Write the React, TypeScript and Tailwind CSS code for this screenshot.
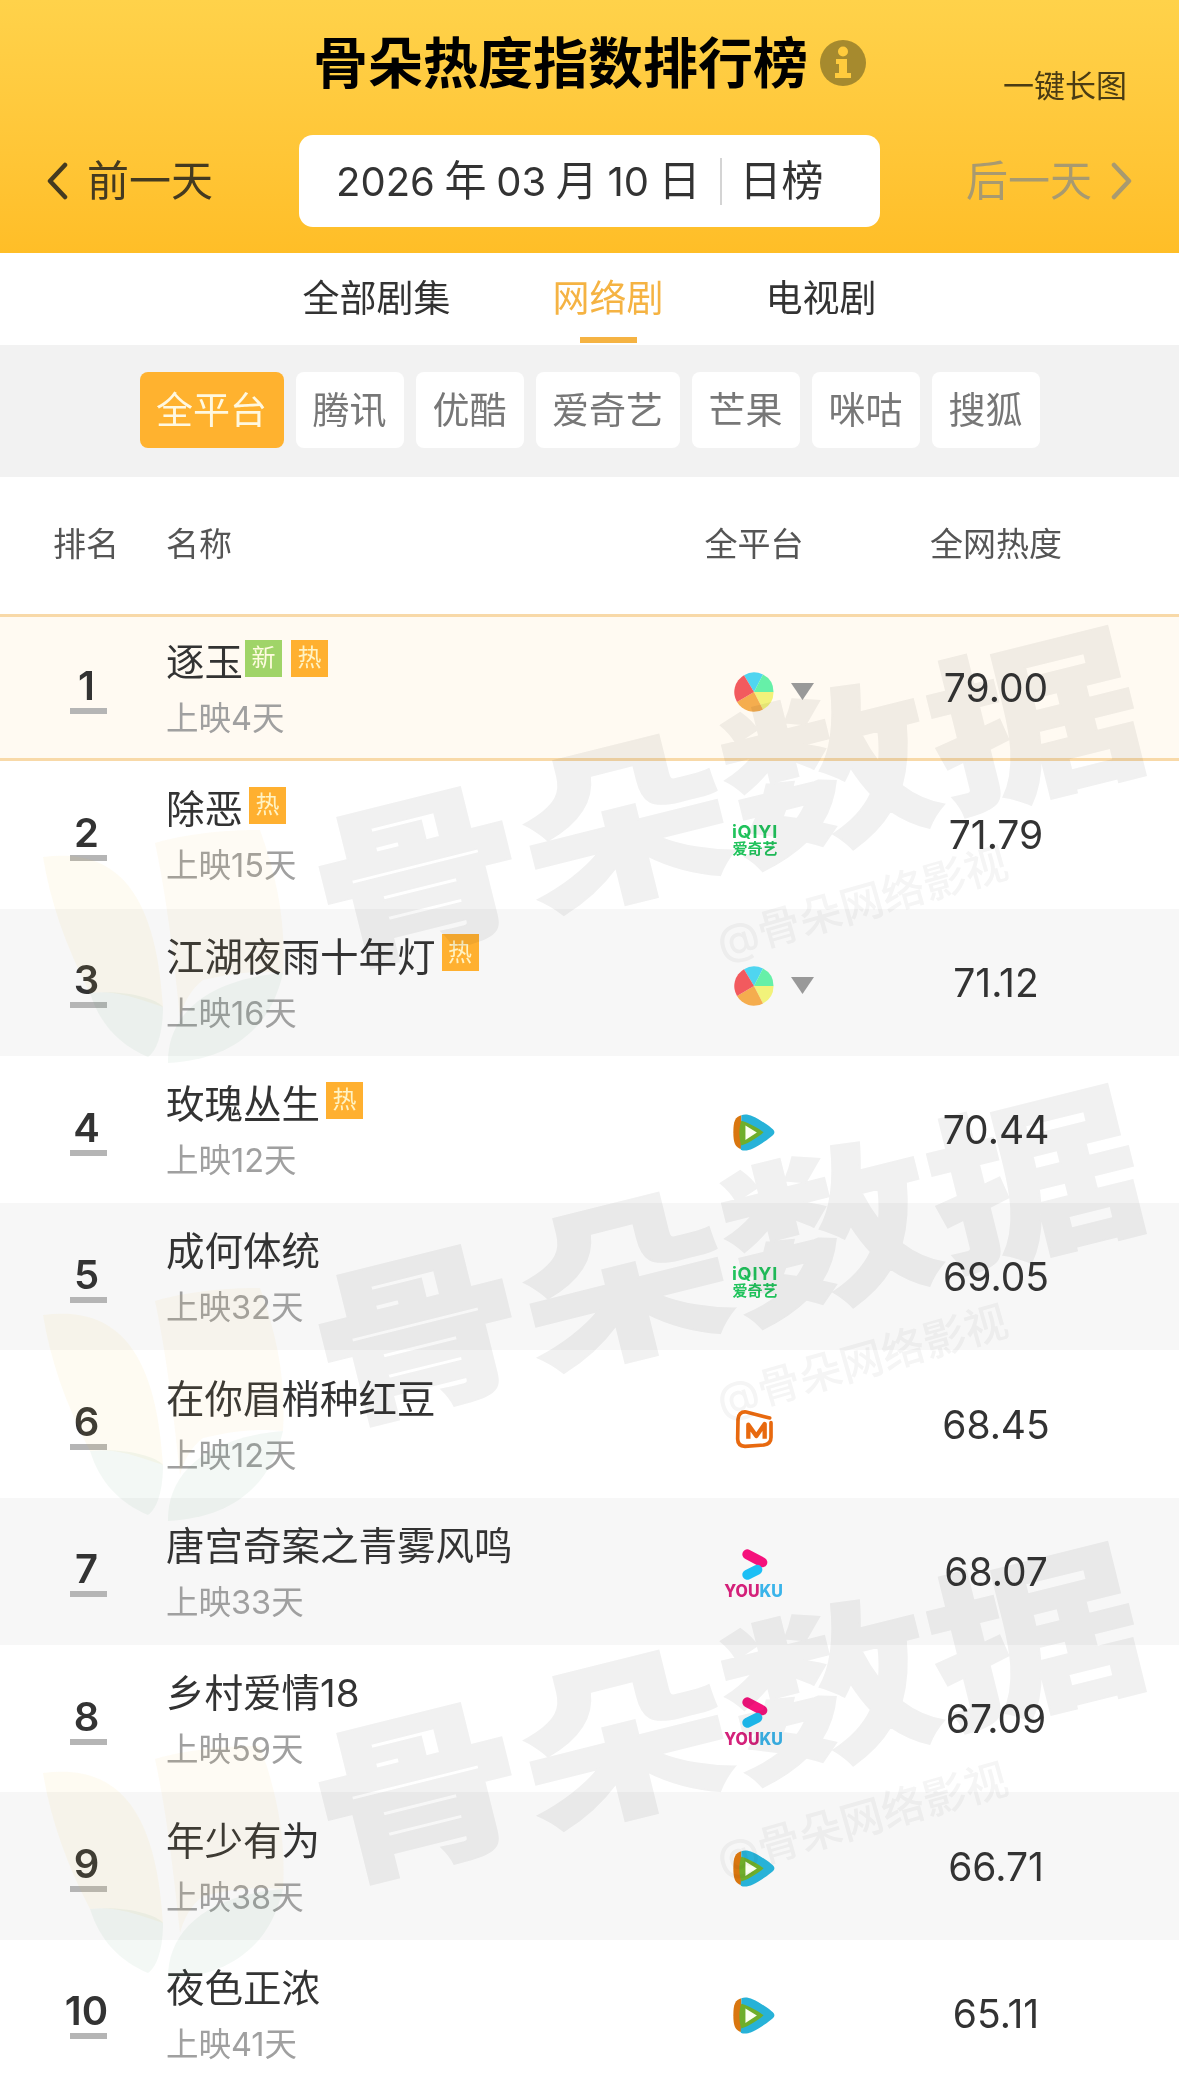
import React from "react";

type Row = { rank: number; name: string; sub: string; isNew?: boolean; hot?: boolean; platform: "all" | "iqiyi" | "tencent" | "mango" | "youku"; heat: string };

const rows: Row[] = [
  { rank: 1, name: "逐玉", sub: "上映4天", isNew: true, hot: true, platform: "all", heat: "79.00" },
  { rank: 2, name: "除恶", sub: "上映15天", hot: true, platform: "iqiyi", heat: "71.79" },
  { rank: 3, name: "江湖夜雨十年灯", sub: "上映16天", hot: true, platform: "all", heat: "71.12" },
  { rank: 4, name: "玫瑰丛生", sub: "上映12天", hot: true, platform: "tencent", heat: "70.44" },
  { rank: 5, name: "成何体统", sub: "上映32天", platform: "iqiyi", heat: "69.05" },
  { rank: 6, name: "在你眉梢种红豆", sub: "上映12天", platform: "mango", heat: "68.45" },
  { rank: 7, name: "唐宫奇案之青雾风鸣", sub: "上映33天", platform: "youku", heat: "68.07" },
  { rank: 8, name: "乡村爱情18", sub: "上映59天", platform: "youku", heat: "67.09" },
  { rank: 9, name: "年少有为", sub: "上映38天", platform: "tencent", heat: "66.71" },
  { rank: 10, name: "夜色正浓", sub: "上映41天", platform: "tencent", heat: "65.11" },
];

function Pie() {
  return (
    <svg width="40" height="40" viewBox="0 0 40 40" className="translate-y-[4px]">
      <path d="M20 20L10 3.2A19.5 19.5 0 0 1 29 2.6Z" fill="#4fd5f0" />
      <path d="M20 20L29 2.6A19.5 19.5 0 0 1 39.5 20Z" fill="#66f0a8" />
      <path d="M20 20L39.5 20A19.5 19.5 0 0 1 29 37.4Z" fill="#f2f27a" />
      <path d="M20 20L29 37.4A19.5 19.5 0 0 1 3 30Z" fill="#f5ad4e" />
      <path d="M20 20L3 30A19.5 19.5 0 0 1 10 3.2Z" fill="#f25a5e" />
    </svg>
  );
}

function Tencent() {
  return (
    <svg width="42" height="42" viewBox="105 40 125 125" className="translate-y-[3px]">
      <path d="M130 50C112 54 106 68 106 100C106 132 112 146 130 150Z" fill="#d9760f" />
      <path d="M130 50C146 42 172 52 220 88C231 96 231 104 220 112C172 150 146 160 128 152Z" fill="#27b2d8" />
      <path d="M130 66C122 84 122 118 130 140C155 130 180 115 196 100C180 88 155 74 130 66Z" fill="#6fae2a" />
      <path d="M142 80L176 101L142 123Z" fill="#fbfff0" />
    </svg>
  );
}

function Mango() {
  return (
    <svg width="40" height="40" viewBox="105 25 120 120" className="translate-y-[5px]">
      <path d="M212 52L142 34C126 32 118 42 117 56L116 115C116 130 124 136 138 137L195 133C209 131 216 124 216 110L216 66" fill="none" stroke="#e8690f" strokeWidth="11" strokeLinecap="round" />
      <path d="M148 114V72L172 106L197 70V114" fill="none" stroke="#e8690f" strokeWidth="13" strokeLinejoin="round" />
    </svg>
  );
}

function Youku() {
  return (
    <svg width="60" height="52" viewBox="75 450 180 156" className="translate-y-[4px]">
      <path d="M145 466L190 490" stroke="#f5127c" strokeWidth="30" strokeLinecap="round" />
      <path d="M145 527L175 512" stroke="#1dbff5" strokeWidth="30" strokeLinecap="round" />
      <text x="76" y="595" fontSize="50" fontWeight="800" fontFamily="Inter, sans-serif" textLength="176" lengthAdjust="spacingAndGlyphs">
        <tspan fill="#d4217a">YOU</tspan>
        <tspan fill="#3ab4ea">KU</tspan>
      </text>
    </svg>
  );
}

function Iqiyi() {
  return (
    <div className="flex translate-x-[1px] translate-y-[6px] flex-col items-center font-bold text-[#20c35c]">
      <span className="text-[18px] leading-[16px] tracking-[0.8px]">iQIYI</span>
      <span className="text-[15px] leading-[17px]">爱奇艺</span>
    </div>
  );
}

function Platform({ p }: { p: Row["platform"] }) {
  if (p === "all")
    return (
      <>
        <Pie />
        <svg width="25" height="17" viewBox="0 0 25 17" className="absolute left-[90px] top-1/2 translate-y-[-5px]">
          <path d="M1 0H24L12.5 17Z" fill="#999999" />
        </svg>
      </>
    );
  if (p === "iqiyi") return <Iqiyi />;
  if (p === "tencent") return <Tencent />;
  if (p === "mango") return <Mango />;
  return <Youku />;
}

function Badge({ kind, afterNew }: { kind: "new" | "hot"; afterNew?: boolean }) {
  return kind === "new" ? (
    <span className="ml-[2px] flex h-[37px] w-[37px] -translate-y-[4px] items-center justify-center bg-[#a0d468] text-[24px] leading-none text-[#fffbe0]">新</span>
  ) : (
    <span className={afterNew ? "ml-[9px] flex h-[37px] w-[37px] -translate-y-[4px] items-center justify-center bg-[#ffb030] text-[24px] leading-none text-[#fff3c4]" : "ml-[6px] flex h-[37px] w-[37px] -translate-y-[4px] items-center justify-center bg-[#ffb030] text-[24px] leading-none text-[#fff3c4]"}>热</span>
  );
}

function TableRow({ r }: { r: Row }) {
  const bg =
    r.rank === 1
      ? "border-y-[3px] border-[#f8d9a8] bg-[#fffaf2]"
      : r.rank % 2 === 1
        ? "bg-[#f7f7f7]"
        : "bg-white";
  return (
    <div className={`flex h-[147.3px] items-center ${bg}`}>
      <div className="ml-[70px] flex w-[96px] flex-col items-start">
        <div className="flex w-[37px] justify-center">
          <span className="-translate-x-[2px] text-[40px] font-semibold leading-[48px] text-[#333333]">{r.rank}</span>
        </div>
        <div className="-mt-[2px] h-[6px] w-[37px] bg-[#b5b5b5]" />
      </div>
      <div className="flex w-[534px] translate-y-[3px] flex-col">
        <div className="flex h-[50px] items-center text-[38.5px] leading-[50px] text-[#333333]">
          <span>{r.name}</span>
          {r.isNew && <Badge kind="new" />}
          {r.hot && <Badge kind="hot" afterNew={r.isNew} />}
        </div>
        <div className="mt-[7px] h-[50px] text-[32.5px] leading-[50px] text-[#a0a0a0]">{r.sub}</div>
      </div>
      <div className="relative flex h-full w-[108px] items-center justify-center">
        <Platform p={r.platform} />
      </div>
      <div className="flex flex-1 justify-center pl-[5px] text-[39px] leading-none text-[#333333]">{r.heat}</div>
    </div>
  );
}

function Watermark({ offset }: { offset: string }) {
  return (
    <div className={`absolute left-0 h-[500px] w-full ${offset}`}>
      <svg width="270" height="270" viewBox="0 0 270 270" className="absolute left-[40px] top-[830px]">
        <path d="M3 27C60 20 115 40 123 177C90 165 70 160 50 163C25 115 10 70 3 27Z" fill="#f5c242" opacity="0.07" />
        <path d="M115 13C160 0 205 0 220 0C238 50 246 95 243 143C205 140 185 145 163 150C150 160 143 175 140 187C132 110 125 60 115 13Z" fill="#f5c242" opacity="0.06" />
        <path d="M50 163C85 160 115 168 123 177C123 200 118 220 108 227C80 215 60 195 50 163Z" fill="#2f8f5a" opacity="0.06" />
        <path d="M128 233C127 190 160 150 243 143C230 200 190 230 128 233Z" fill="#2f8f5a" opacity="0.06" />
      </svg>
      <div className="absolute left-[727px] top-[800px] -translate-x-1/2 -translate-y-1/2 -rotate-[14deg] scale-y-[0.8] whitespace-nowrap text-[212px] font-black leading-none text-[#f1f1f1] mix-blend-multiply [-webkit-text-stroke:2px_#f1f1f1]">骨朵数据</div>
      <div className="absolute left-[862px] top-[903px] -translate-x-1/2 -translate-y-1/2 -rotate-[16deg] whitespace-nowrap text-[43px] font-medium leading-none text-[#f5f5f5] mix-blend-multiply">@骨朵网络影视</div>
    </div>
  );
}

const filters = ["全平台", "腾讯", "优酷", "爱奇艺", "芒果", "咪咕", "搜狐"];

export default function App() {
  return (
    <div className="relative h-[2083px] w-[1179px] overflow-hidden bg-white font-['Inter','Noto_Sans_CJK_SC',sans-serif]">
      <header className="h-[253px] bg-gradient-to-b from-[#ffd24a] to-[#ffbe27]">
        <div className="grid h-[135px] grid-cols-[1fr_auto_1fr] pt-[34px]">
          <div />
          <div className="flex h-[58px] items-center gap-[12px]">
            <h1 className="text-[55px] font-bold leading-[58px] text-black">骨朵热度指数排行榜</h1>
            <svg width="46" height="46" viewBox="0 0 46 46">
              <circle cx="23" cy="23" r="23" fill="#a68a2e" />
              <circle cx="23" cy="11.5" r="5" fill="#ffcb3d" />
              <path d="M16 19H27V33H31V38H15V33H19V24H16Z" fill="#ffcb3d" />
            </svg>
          </div>
          <div className="flex justify-end pr-[52px] pt-[31px] text-[31px] leading-[42px] text-[#4a3c14]">一键长图</div>
        </div>
        <div className="flex h-[92px] items-center">
          <div className="flex w-[299px] items-center pl-[46px] text-[42px] leading-none text-[#443a20]">
            <svg width="22" height="38" viewBox="0 0 22 38" className="mr-[19px]">
              <path d="M19 3L4 19L19 35" fill="none" stroke="#443a20" strokeWidth="4.5" strokeLinecap="round" strokeLinejoin="round" />
            </svg>
            <span>前一天</span>
          </div>
          <div className="flex h-[92px] w-[581px] items-center rounded-[14px] bg-white pl-[37px] text-[40px] leading-none text-[#333333]">
            <span className="whitespace-nowrap [word-spacing:-1.6px]">
              2026 <span className="text-[42px]">年</span> 03 <span className="text-[42px]">月</span> 10 <span className="text-[42px]">日</span>
            </span>
            <span className="ml-[19px] mr-[18px] h-[47px] w-[2px] bg-[#d4d4d4]" />
            <span className="text-[42px]">日榜</span>
          </div>
          <div className="flex flex-1 items-center justify-end pr-[46px] text-[42px] leading-none text-[#a89a70]">
            <span>后一天</span>
            <svg width="22" height="38" viewBox="0 0 22 38" className="ml-[19px]">
              <path d="M3 3L18 19L3 35" fill="none" stroke="#a89a70" strokeWidth="4.5" strokeLinecap="round" strokeLinejoin="round" />
            </svg>
          </div>
        </div>
      </header>

      <nav className="flex h-[92px] items-center justify-center gap-[102px] bg-white pb-[2px] text-[37px] leading-none text-[#333333]">
        <span>全部剧集</span>
        <span className="relative text-[#f5b343]">
          网络剧
          <span className="absolute left-[27px] top-[57px] h-[6px] w-[57px] bg-[#f5b343]" />
        </span>
        <span>电视剧</span>
      </nav>

      <div className="flex h-[132px] items-center justify-center gap-[12px] bg-[#f2f2f2] pb-[2px]">
        {filters.map((f, i) => (
          <span
            key={f}
            className={
              i === 0
                ? "flex h-[76px] w-[144px] items-center justify-center rounded-[8px] bg-[#ffb22f] text-[37px] leading-none text-[#fff8e0]"
                : f === "爱奇艺"
                  ? "flex h-[76px] w-[144px] items-center justify-center rounded-[8px] bg-white text-[37px] leading-none text-[#777777]"
                  : "flex h-[76px] w-[108px] items-center justify-center rounded-[8px] bg-white text-[37px] leading-none text-[#777777]"
            }
          >
            {f}
          </span>
        ))}
      </div>

      <div className="flex h-[137px] items-center pb-[3px] text-[33px] leading-none text-[#555555]">
        <div className="w-[166px] pl-[53px]">排名</div>
        <div className="w-[534px]">名称</div>
        <div className="w-[108px] text-center whitespace-nowrap">全平台</div>
        <div className="flex flex-1 justify-center pl-[5px]">全网热度</div>
      </div>

      <div>
        {rows.map((r) => (
          <TableRow key={r.rank} r={r} />
        ))}
      </div>

      <div className="pointer-events-none absolute inset-0">
        <Watermark offset="top-0" />
        <Watermark offset="top-[458px]" />
        <Watermark offset="top-[916px]" />
      </div>
    </div>
  );
}
